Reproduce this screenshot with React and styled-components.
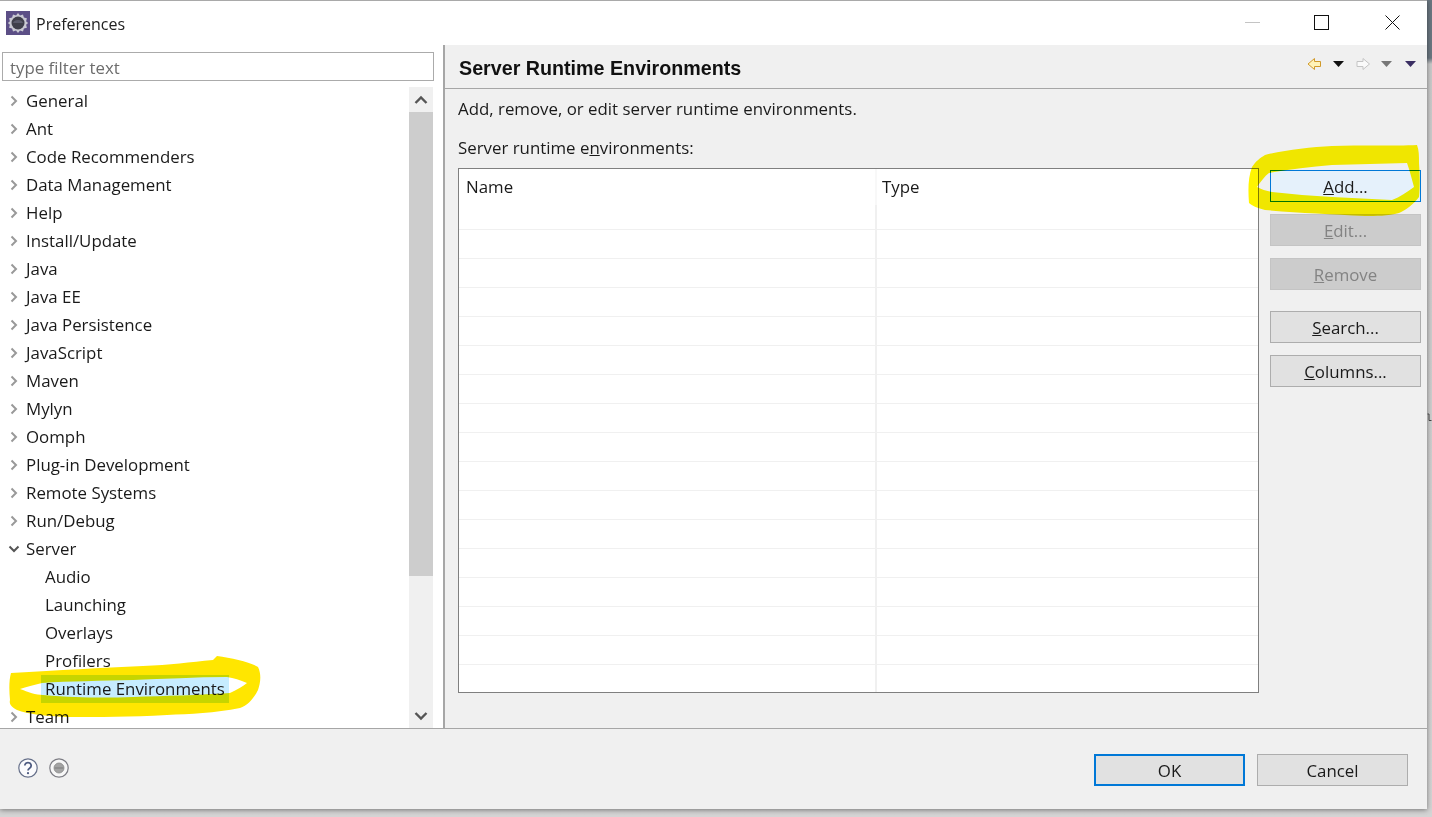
import React from 'react';
import styled, { createGlobalStyle } from 'styled-components';

const TREE = [
  { label: 'General', arrow: 'right' },
  { label: 'Ant', arrow: 'right' },
  { label: 'Code Recommenders', arrow: 'right' },
  { label: 'Data Management', arrow: 'right' },
  { label: 'Help', arrow: 'right' },
  { label: 'Install/Update', arrow: 'right' },
  { label: 'Java', arrow: 'right' },
  { label: 'Java EE', arrow: 'right' },
  { label: 'Java Persistence', arrow: 'right' },
  { label: 'JavaScript', arrow: 'right' },
  { label: 'Maven', arrow: 'right' },
  { label: 'Mylyn', arrow: 'right' },
  { label: 'Oomph', arrow: 'right' },
  { label: 'Plug-in Development', arrow: 'right' },
  { label: 'Remote Systems', arrow: 'right' },
  { label: 'Run/Debug', arrow: 'right' },
  { label: 'Server', arrow: 'down' },
  { label: 'Audio', child: true },
  { label: 'Launching', child: true },
  { label: 'Overlays', child: true },
  { label: 'Profilers', child: true },
  { label: 'Runtime Environments', child: true, selected: true },
  { label: 'Team', arrow: 'right' },
];

const EMPTY_ROWS = Array.from({ length: 17 }, (_, i) => i);

const GlobalStyle = createGlobalStyle`
  html, body {
    margin: 0;
    padding: 0;
    background: #fff;
    overflow: hidden;
  }
  * {
    box-sizing: border-box;
  }
`;

const Page = styled.div`
  position: relative;
  width: 1432px;
  height: 817px;
  overflow: hidden;
  font-family: "Open Sans", "Noto Sans", sans-serif;
  font-size: 16.85px;
  color: #1a1a1a;
  background: linear-gradient(to bottom, #6a7680 0, #6a7680 58px, #c9c9c9 64px, #d4d4d4 100%);
`;

const Window = styled.div`
  width: 1427px;
  height: 809px;
  display: flex;
  flex-direction: column;
  background: #f0f0f0;
  border-top: 1px solid #a9a9a9;
  box-shadow: 0 1px 5px rgba(0, 0, 0, 0.45);
`;

const TitleBar = styled.div`
  height: 44px;
  flex: none;
  display: flex;
  align-items: center;
  background: #fff;
  padding: 0 0 1px 6px;
`;

const TitleText = styled.span`
  margin-left: 6px;
  padding-top: 3px;
  flex: 1;
  font-size: 16px;
  color: #222;
`;

const WindowButton = styled.div`
  width: 70px;
  height: 43px;
  display: flex;
  align-items: center;
  justify-content: center;
  padding-right: ${(p) => (p.$nudge ? '2px' : '0')};
`;

const Body = styled.div`
  flex: 1;
  min-height: 0;
  display: flex;
`;

const LeftPane = styled.div`
  width: 445px;
  flex: none;
  display: flex;
  flex-direction: column;
  background: #fff;
  border-right: 2px solid #a6a6a6;
  padding: 7px 10px 0 0;
`;

const FilterInput = styled.div`
  height: 29px;
  margin: 0 -1px 0 2px;
  padding: 1px 0 0 7px;
  flex: none;
  display: flex;
  align-items: center;
  border: 1px solid #ababab;
  color: #6d6d6d;
`;

const TreeArea = styled.div`
  flex: 1;
  min-height: 0;
  margin-top: 6px;
  display: flex;
`;

const TreeList = styled.div`
  flex: 1;
  min-width: 0;
  overflow: hidden;
`;

const TreeRow = styled.div`
  height: 28px;
  display: flex;
  align-items: center;
  padding-left: ${(p) => (p.$child ? '41px' : '8px')};
`;

const ArrowSlot = styled.span`
  width: 14px;
  flex: none;
  display: flex;
  align-items: center;
`;

const RowLabel = styled.span`
  display: block;
  line-height: 28px;
  padding: 0 4px;
  background: ${(p) => (p.$selected ? '#c6ecff' : 'transparent')};
  white-space: nowrap;
`;

const Scrollbar = styled.div`
  width: 24px;
  flex: none;
  display: flex;
  flex-direction: column;
  background: #f0f0f0;
`;

const ScrollButton = styled.div`
  height: 25px;
  flex: none;
  display: flex;
  align-items: center;
  justify-content: center;
`;

const ScrollThumb = styled.div`
  height: 464px;
  flex: none;
  background: #cdcdcd;
`;

const ScrollGap = styled.div`
  flex: 1;
`;

const RightPane = styled.div`
  flex: 1;
  min-width: 0;
  display: flex;
  flex-direction: column;
`;

const PageHeader = styled.div`
  height: 44px;
  flex: none;
  display: flex;
  align-items: center;
  padding: 3px 11px 0 14px;
  border-bottom: 1px solid #a6a6a6;
`;

const PageTitle = styled.h1`
  flex: 1;
  margin: 0;
  font-family: "Liberation Sans", Arial, sans-serif;
  font-size: 19.7px;
  font-weight: 700;
  color: #111;
`;

const NavIcons = styled.div`
  display: flex;
  align-items: center;
  margin-top: -9px;
`;

const Content = styled.div`
  flex: 1;
  min-height: 0;
  padding: 8px 6px 0 13px;
  display: flex;
  flex-direction: column;
`;

const Description = styled.p`
  margin: 0;
  height: 24px;
  line-height: 24px;
`;

const SectionLabel = styled.p`
  margin: 15px 0 8px;
  height: 24px;
  line-height: 24px;
`;

const TableRow = styled.div`
  display: flex;
`;

const TableLayout = styled.div`
  display: flex;
  gap: 11px;
`;

const Table = styled.div`
  width: 801px;
  height: 525px;
  flex: none;
  background: #fff;
  border: 1px solid #7f7f7f;
  overflow: hidden;
`;

const HeaderCell = styled.div`
  height: 36px;
  line-height: 36px;
  padding-left: ${(p) => (p.$wide ? '7px' : '5px')};
  flex: ${(p) => (p.$wide ? '0 0 418px' : '1')};
  border-right: ${(p) => (p.$wide ? '2px solid #f8f8f8' : 'none')};
  color: #1a1a1a;
`;

const Cell = styled.div`
  height: ${(p) => (p.$first ? '25px' : '29px')};
  flex: ${(p) => (p.$wide ? '0 0 418px' : '1')};
  border-bottom: 1px solid #f0f0f0;
  border-right: ${(p) => (p.$wide ? '2px solid #f0f0f0' : 'none')};
`;

const ButtonColumn = styled.div`
  width: 151px;
  flex: none;
  padding-top: 2px;
  display: flex;
  flex-direction: column;
  gap: 12px;
`;

const ButtonGroup = styled.div`
  display: flex;
  flex-direction: column;
  gap: 12px;
  margin-top: ${(p) => (p.$spaced ? '9px' : '0')};
`;

const Button = styled.div`
  width: 151px;
  height: 32px;
  display: flex;
  align-items: center;
  justify-content: center;
  border: 1px solid ${(p) => (p.$hover ? '#0078d7' : p.$disabled ? '#c4c4c4' : '#adadad')};
  background: ${(p) => (p.$hover ? '#e5f1fb' : p.$disabled ? '#cccccc' : '#e1e1e1')};
  color: ${(p) => (p.$disabled ? '#838383' : '#1a1a1a')};
`;

const Footer = styled.div`
  height: 81px;
  flex: none;
  display: flex;
  align-items: flex-start;
  padding: 25px 19px 0 18px;
  border-top: 1px solid #a6a6a6;
`;

const FooterIcons = styled.div`
  flex: 1;
  display: flex;
  gap: 11px;
  margin-top: 4px;
`;

const FooterButtons = styled.div`
  display: flex;
  gap: 12px;
`;

const DialogButton = styled(Button)`
  border: ${(p) => (p.$default ? '2px solid #0078d7' : '1px solid #adadad')};
`;

const Scribbles = styled.svg`
  position: absolute;
  left: 0;
  top: 0;
  pointer-events: none;
  mix-blend-mode: multiply;
`;

const BehindGlyph = styled.svg`
  position: absolute;
  left: 1427px;
  top: 413px;
`;

function Chevron({ dir }) {
  const d = dir === 'down' ? 'M1.5 3.5 L6 8 L10.5 3.5' : 'M3.5 1.5 L8 6 L3.5 10.5';
  return (
    <svg width="12" height="12" viewBox="0 0 12 12">
      <path d={d} fill="none" stroke={dir === 'down' ? '#555' : '#999'} strokeWidth="2" />
    </svg>
  );
}

function ScrollArrow({ up }) {
  return (
    <svg width="14" height="10" viewBox="0 0 14 10">
      <path d={up ? 'M1.5 8 L7 2.5 L12.5 8' : 'M1.5 2 L7 7.5 L12.5 2'} fill="none" stroke="#555" strokeWidth="2.4" />
    </svg>
  );
}

function AppLogo() {
  return (
    <svg width="24" height="24" viewBox="0 0 24 24">
      <rect width="24" height="24" fill="#5c4f86" />
      <path
        d="M12 2 l2 2.4 3-1 .9 3 3 .8 -.8 3 2 1.8 -2 1.8 .8 3 -3 .8 -.9 3 -3-1 -2 2.4 -2-2.4 -3 1 -.9-3 -3-.8 .8-3 -2-1.8 2-1.8 -.8-3 3-.8 .9-3 3 1z"
        fill="#c9c9d2"
      />
      <circle cx="12" cy="12" r="6.5" fill="#3f3f4a" />
      <path d="M7 12 a5 3 0 0 1 10 0z" fill="#5a5a6a" />
    </svg>
  );
}

function NavTriangle({ color, margin }) {
  return (
    <svg width="11" height="6" viewBox="0 0 11 6" style={{ marginLeft: margin }}>
      <path d="M0 0 H11 L5.5 6z" fill={color} />
    </svg>
  );
}

function NavArrow({ back, margin }) {
  const d = back
    ? 'M1 7 L7.5 1.5 V4.5 H13.5 V9.5 H7.5 V12.5z'
    : 'M13.5 7 L7 1.5 V4.5 H1 V9.5 H7 V12.5z';
  return (
    <svg width="15" height="14" viewBox="0 0 15 14" style={{ marginLeft: margin }}>
      <path
        d={d}
        fill={back ? '#fff3b8' : '#fafafa'}
        stroke={back ? '#d19a2a' : '#c4c4c4'}
        strokeWidth="1"
      />
    </svg>
  );
}

function HelpIcon() {
  return (
    <svg width="20" height="20" viewBox="0 0 20 20">
      <circle cx="10" cy="10" r="9.2" fill="#fbfbfd" stroke="#66708a" strokeWidth="1.2" />
      <path d="M6.8 7.6 a3.2 3 0 1 1 4.8 2.6 c-1.2.7-1.6 1.2-1.6 2.4" fill="none" stroke="#4c5a80" strokeWidth="1.8" />
      <circle cx="10" cy="15.2" r="1.1" fill="#4c5a80" />
    </svg>
  );
}

function RecordIcon() {
  return (
    <svg width="20" height="20" viewBox="0 0 20 20">
      <circle cx="10" cy="10" r="9.2" fill="#f7f7f7" stroke="#7d7d84" strokeWidth="1.2" />
      <circle cx="10" cy="10" r="5" fill="#a3a3a3" stroke="#8a8a8a" strokeWidth="0.8" />
      <rect x="5.5" y="9" width="9" height="2" fill="#8f8f8f" />
    </svg>
  );
}

export default function App() {
  return (
    <Page>
      <GlobalStyle />
      <Window>
        <TitleBar>
          <AppLogo />
          <TitleText>Preferences</TitleText>
          <WindowButton>
            <svg width="15" height="2" viewBox="0 0 15 2">
              <rect width="15" height="1" fill="#c4c4c4" />
            </svg>
          </WindowButton>
          <WindowButton $nudge>
            <svg width="15" height="15" viewBox="0 0 15 15">
              <rect x="0.5" y="0.5" width="14" height="14" fill="none" stroke="#111" />
            </svg>
          </WindowButton>
          <WindowButton>
            <svg width="15" height="15" viewBox="0 0 15 15">
              <path d="M0.5 0.5 L14.5 14.5 M14.5 0.5 L0.5 14.5" stroke="#111" strokeWidth="1" />
            </svg>
          </WindowButton>
        </TitleBar>
        <Body>
          <LeftPane>
            <FilterInput>type filter text</FilterInput>
            <TreeArea>
              <TreeList>
                {TREE.map((item) => (
                  <TreeRow key={item.label} $child={item.child}>
                    {item.arrow && (
                      <ArrowSlot>
                        <Chevron dir={item.arrow} />
                      </ArrowSlot>
                    )}
                    <RowLabel $selected={item.selected}>{item.label}</RowLabel>
                  </TreeRow>
                ))}
              </TreeList>
              <Scrollbar>
                <ScrollButton>
                  <ScrollArrow up />
                </ScrollButton>
                <ScrollThumb />
                <ScrollGap />
                <ScrollButton>
                  <ScrollArrow />
                </ScrollButton>
              </Scrollbar>
            </TreeArea>
          </LeftPane>
          <RightPane>
            <PageHeader>
              <PageTitle>Server Runtime Environments</PageTitle>
              <NavIcons>
                <NavArrow back />
                <NavTriangle color="#111" margin="11px" />
                <NavArrow margin="12px" />
                <NavTriangle color="#777" margin="10px" />
                <NavTriangle color="#3b2f63" margin="13px" />
              </NavIcons>
            </PageHeader>
            <Content>
              <Description>Add, remove, or edit server runtime environments.</Description>
              <SectionLabel>
                Server runtime e<u>n</u>vironments:
              </SectionLabel>
              <TableLayout>
                <Table>
                  <TableRow>
                    <HeaderCell $wide>Name</HeaderCell>
                    <HeaderCell>Type</HeaderCell>
                  </TableRow>
                  {EMPTY_ROWS.map((i) => (
                    <TableRow key={i}>
                      <Cell $wide $first={i === 0} />
                      <Cell $first={i === 0} />
                    </TableRow>
                  ))}
                </Table>
                <ButtonColumn>
                  <ButtonGroup>
                    <Button $hover>
                      <span>
                        <u>A</u>dd...
                      </span>
                    </Button>
                    <Button $disabled>
                      <span>
                        <u>E</u>dit...
                      </span>
                    </Button>
                    <Button $disabled>
                      <span>
                        <u>R</u>emove
                      </span>
                    </Button>
                  </ButtonGroup>
                  <ButtonGroup $spaced>
                    <Button>
                      <span>
                        <u>S</u>earch...
                      </span>
                    </Button>
                    <Button>
                      <span>
                        <u>C</u>olumns...
                      </span>
                    </Button>
                  </ButtonGroup>
                </ButtonColumn>
              </TableLayout>
            </Content>
          </RightPane>
        </Body>
        <Footer>
          <FooterIcons>
            <HelpIcon />
            <RecordIcon />
          </FooterIcons>
          <FooterButtons>
            <DialogButton $default>OK</DialogButton>
            <DialogButton>Cancel</DialogButton>
          </FooterButtons>
        </Footer>
      </Window>
      <BehindGlyph width="5" height="10" viewBox="0 0 5 10">
        <path d="M0.5 1 H2 V7.5 H4.5" fill="none" stroke="#444" strokeWidth="1" />
      </BehindGlyph>
      <Scribbles width="1432" height="817" viewBox="0 0 1432 817">
        <path
          fillRule="evenodd"
          fill="#ffe600"
          d="M11 673 C60 670 100 668 143 666 C170 665 190 662 213 660 L217 656 C232 658 250 662 258 667 C262 675 260 684 258 690 C254 698 248 705 240 708 C215 713 190 714 167 715 C130 717 100 717 67 717 C45 716 28 714 17 710 C11 707 9 704 10 700 C9 690 9 680 11 673Z M20 689 C28 692 36 695 43 695 C80 698 105 698 133 697 C165 696 200 695 230 693 C237 690 243 686 247 683 C240 680 234 678 227 677 C195 677 165 679 133 680 C100 681 70 681 42 683 C34 685 26 687 20 689Z"
        />
        <path
          fillRule="evenodd"
          fill="#fff500"
          d="M1252 167 C1256 161 1260 158 1265 155 C1285 150 1310 147 1332 146 C1360 145 1395 146 1417 145 C1419 150 1419 156 1419 163 C1420 175 1420 187 1419 197 C1414 204 1406 210 1399 213 C1388 216 1376 216 1365 216 C1330 214 1298 213 1265 210 C1258 208 1252 206 1249 203 C1248 190 1248 178 1252 167Z M1257 187 C1261 181 1265 176 1269 173 C1290 169 1310 167 1332 165 C1358 164 1382 164 1407 163 C1410 171 1412 180 1414 187 C1407 192 1400 197 1392 200 C1372 199 1352 198 1332 197 C1312 196 1292 194 1272 192 C1266 191 1261 189 1257 187Z"
        />
      </Scribbles>
    </Page>
  );
}
